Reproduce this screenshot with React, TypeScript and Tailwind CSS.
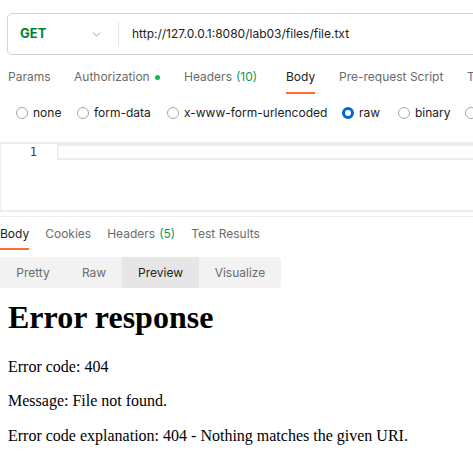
import { ChevronDown } from 'lucide-react'

const REQUEST_TABS = [
  { label: 'Params', w: 'w-[66px]' },
  { label: 'Authorization', w: 'w-[110px]', dot: true },
  { label: 'Headers', w: 'w-[102px]', count: '(10)' },
  { label: 'Body', w: 'w-[53px]', active: true },
  { label: 'Pre-request Script', w: 'w-[128px]' },
  { label: 'Tests', w: 'w-[60px]' },
]

const BODY_TYPES = [
  { label: 'none', w: 'w-[61px]' },
  { label: 'form-data', w: 'w-[90px]' },
  { label: 'x-www-form-urlencoded', w: 'w-[175px]' },
  { label: 'raw', w: 'w-[56px]', checked: true },
  { label: 'binary', w: 'w-[67px]' },
  { label: 'GraphQL', w: 'w-[90px]' },
]

const RESPONSE_TABS = [
  { label: 'Body', active: true },
  { label: 'Cookies' },
  { label: 'Headers', count: '(5)' },
  { label: 'Test Results' },
]

const VIEW_MODES = [
  { label: 'Pretty', w: 'w-[66px]' },
  { label: 'Raw', w: 'w-[56px]' },
  { label: 'Preview', w: 'w-[77px]', active: true },
  { label: 'Visualize', w: 'w-[82px]' },
]

export default function App() {
  return (
    <div className="w-[473px] h-[466px] overflow-hidden bg-white font-['Inter',sans-serif] text-[12px] text-[#212121] whitespace-nowrap">
      <div className="w-[700px]">
        {/* url bar */}
        <div className="pt-[13px] pl-[7px]">
          <div className="h-[42px] flex items-center border border-[#d4d4d4] rounded-[5px]">
            <div className="w-[110px] flex items-center pl-[12px]">
              <span className="font-bold text-[#007f31] text-[13px] w-[70px]">GET</span>
              <ChevronDown size={13} strokeWidth={1.5} className="text-[#8a8a8a]" />
            </div>
            <div className="w-px h-[24px] bg-[#e6e6e6]" />
            <span className="pl-[13px] text-[12px] text-[#212121]">http://127.0.0.1:8080/lab03/files/file.txt</span>
          </div>
        </div>

        {/* request tabs */}
        <div className="flex pl-[8px] h-[39px] pt-[5px]">
          {REQUEST_TABS.map((t) => (
            <div key={t.label} className={`${t.w} flex`}>
              <div className="relative flex items-center">
                <span className={t.active ? 'text-[#212121]' : 'text-[#6b6b6b]'}>{t.label}</span>
                {t.count && <span className="ml-[4px] text-[#0a9b50]">{t.count}</span>}
                {t.dot && <span className="ml-[5px] w-[5px] h-[5px] rounded-full bg-[#0cbb52]" />}
                {t.active && <span className="absolute left-0 right-0 bottom-0 h-[2px] bg-[#ff6c37]" />}
              </div>
            </div>
          ))}
        </div>

        {/* body type radios */}
        <div className="flex items-center pl-[16px] h-[38px]">
          {BODY_TYPES.map((b) => (
            <div key={b.label} className={`${b.w} flex items-center gap-[5px]`}>
              {b.checked ? (
                <span className="w-[12px] h-[12px] rounded-full border-[3px] border-[#0265d2]" />
              ) : (
                <span className="w-[12px] h-[12px] rounded-full border border-[#a6a6a6]" />
              )}
              <span className="text-[#212121]">{b.label}</span>
            </div>
          ))}
        </div>

        {/* editor */}
        <div className="mt-[10px] h-[70px] border-t-2 border-b-2 border-l border-[#ededed] flex">
          <div className="w-[56px] flex justify-end pr-[20px]">
            <span className="font-['DejaVu_Sans_Mono',monospace] text-[12px] leading-[16px] text-[#1c3f9e]">1</span>
          </div>
          <div className="flex-1">
            <div className="h-[16px] border-2 border-[#ededed]" />
          </div>
        </div>
        <div className="mt-[4px] h-px bg-[#ededed]" />

        {/* response tabs */}
        <div className="flex gap-[16px] h-[33px] pt-[1px]">
          {RESPONSE_TABS.map((t) => (
            <div key={t.label} className="relative flex items-center">
              <span className={t.active ? 'text-[#212121]' : 'text-[#6b6b6b]'}>{t.label}</span>
              {t.count && <span className="ml-[4px] text-[#0a9b50]">{t.count}</span>}
              {t.active && <span className="absolute left-0 right-0 bottom-0 h-[2px] bg-[#ff6c37]" />}
            </div>
          ))}
        </div>

        {/* view modes */}
        <div className="mt-[7px] flex w-[281px] h-[31px] rounded-r-[4px] bg-[#f2f2f2] overflow-hidden">
          {VIEW_MODES.map((m) => (
            <div
              key={m.label}
              className={`${m.w} flex items-center justify-center ${m.active ? 'bg-[#e6e6e6] text-[#212121]' : 'text-[#6b6b6b]'}`}
            >
              {m.label}
            </div>
          ))}
        </div>

        {/* preview */}
        <div className="px-[8px] font-['Liberation_Serif',serif] text-black">
          <h1 className="text-[32px] font-bold leading-[1.15] mt-[11px] mb-[22px]">Error response</h1>
          <p className="text-[16px] leading-[1.15] mb-[16px]">Error code: 404</p>
          <p className="text-[16px] leading-[1.15] mb-[16px]">Message: File not found.</p>
          <p className="text-[16px] leading-[1.15]">Error code explanation: 404 - Nothing matches the given URI.</p>
        </div>
      </div>
    </div>
  )
}
